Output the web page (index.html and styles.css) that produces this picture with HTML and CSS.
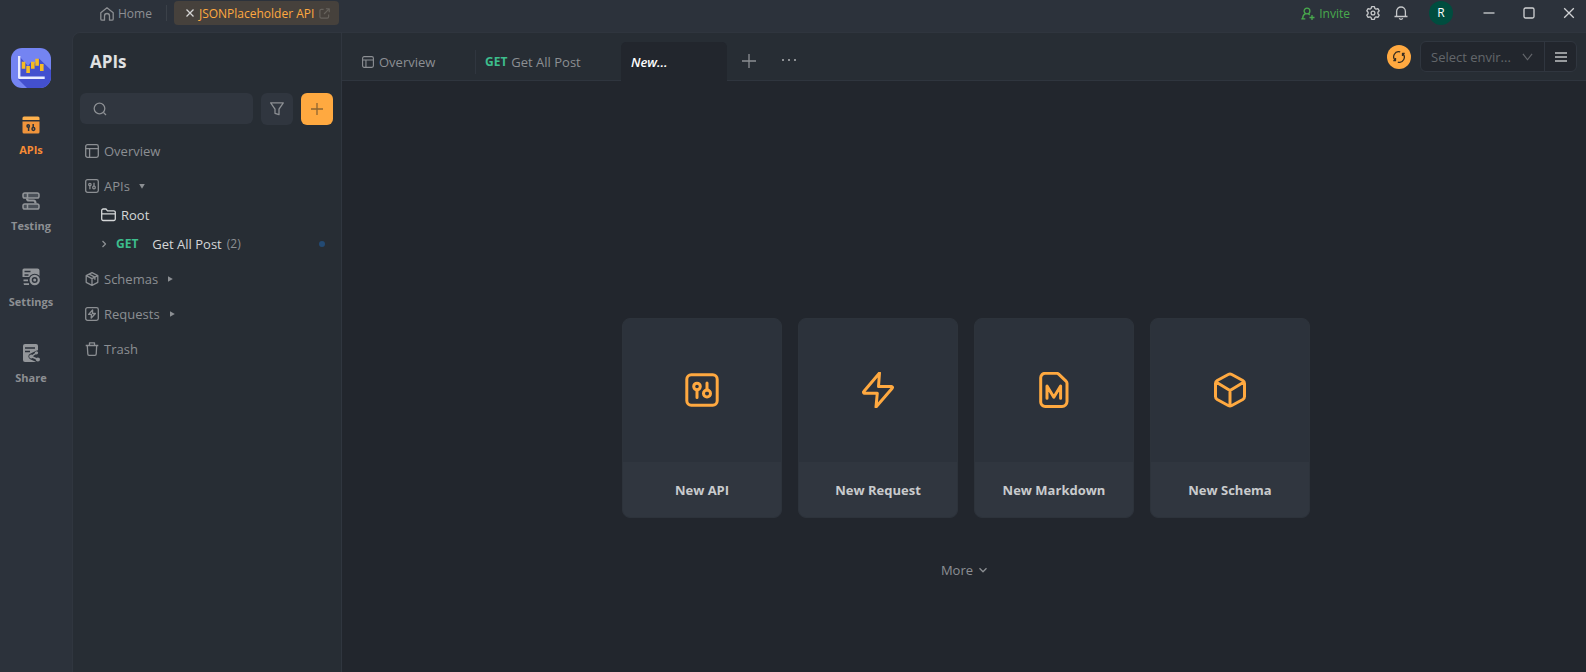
FILE: index.html
```html
<!DOCTYPE html>
<html lang="en">
<head>
<meta charset="utf-8">
<title>JSONPlaceholder API</title>
<link rel="stylesheet" href="styles.css">
</head>
<body>
<svg class="defs" aria-hidden="true">
  <symbol id="i-layout" viewBox="0 0 14 14"><rect x=".7" y=".7" width="12.6" height="12.6" rx="1.8"/><path d="M.7 4.6h12.6M4.6 4.6v8.7"/></symbol>
  <symbol id="i-api" viewBox="0 0 14 14"><rect x=".7" y=".7" width="12.6" height="12.6" rx="1.8"/><circle cx="4.9" cy="5.5" r="1.2"/><path d="M4.9 6.7v3.5M9 3.8v3.2"/><circle cx="9" cy="8.5" r="1.3"/></symbol>
  <symbol id="i-box" viewBox="0 0 14 14"><path d="M7 .7l5.800 3v6.600L7 13.300l-5.800-3V3.700zM1.200 3.700L7 6.700l5.800-3M7 6.700v6.600M4.100 2.200l5.800 3v2.600"/></symbol>
  <symbol id="i-request" viewBox="0 0 14 14"><rect x=".7" y=".7" width="12.600" height="12.600" rx="1.800"/><path d="M7.600 3L3.600 7.400h2.800L6.200 11l4.200-4.500H7.500z"/></symbol>
</svg>
<header class="titlebar">
  <nav class="crumbs">
    <a class="home" href="#">
      <svg class="ic14" viewBox="0 0 14 14"><path d="M.8 5.800L7 .8l6.200 5v6.100a1.300 1.300 0 0 1-1.300 1.300H9.500V9a2.500 2.500 0 0 0-5 0v4.200H2.100A1.300 1.300 0 0 1 .8 11.900z"/></svg>
      Home
    </a>
    <span class="crumb-line"></span>
    <div class="project">
      <button class="bare" aria-label="Close project"><svg class="ic8" viewBox="0 0 8 8"><path d="M.5.5l7 7M7.500.5l-7 7"/></svg></button>
      <a href="#">JSONPlaceholder API</a>
      <svg class="external" viewBox="0 0 12 12"><path d="M5 1.500H2.500a1.500 1.500 0 0 0-1.500 1.500v6.500A1.500 1.500 0 0 0 2.500 11H9a1.500 1.500 0 0 0 1.500-1.500V7M7.500.8h3.700v3.700M11 1L5.500 6.500"/></svg>
    </div>
  </nav>
  <div class="actions">
    <button class="invite">
      <svg class="ic14" viewBox="0 0 14 14"><circle cx="6" cy="4" r="2.900"/><path d="M4.600 6.600C2.500 7.500 1.700 9 1.700 11.500M.3 11.800h4M7.200 6.600l1.500 1.400M11 8v5M8.500 10.500h5"/></svg>
      Invite
    </button>
    <button class="bare gear" aria-label="Settings"><svg class="ic14" viewBox="0 0 14 14"><path d="M5.600.7h2.800l.5 1.800 1.100.6 1.900-.5 1.300 2.300L11.900 6.300v1.400l1.300 1.400-1.300 2.300-1.900-.5-1.100.6-.5 1.800H5.600l-.5-1.800-1.100-.6-1.900.5L.8 9.100l1.300-1.400V6.300L.8 4.900l1.300-2.300 1.900.5 1.100-.6z"/><circle cx="7" cy="7" r="1.900"/></svg></button>
    <button class="bare bell" aria-label="Notifications"><svg class="ic14" viewBox="0 0 14 14"><path d="M2.600 10.500V5.400a4.400 4.400 0 0 1 8.800 0v5.100M.5 10.500h13M5.300 12.300a1.800 1.500 0 0 0 3.400 0"/></svg></button>
    <button class="avatar" aria-label="Account">R</button>
    <div class="window-buttons">
      <button class="bare" aria-label="Minimize"><svg class="ic12" viewBox="0 0 12 12"><path d="M.5 6h11"/></svg></button>
      <button class="bare" aria-label="Maximize"><svg class="ic12" viewBox="0 0 12 12"><rect x="1" y="1" width="10" height="10" rx="1.500"/></svg></button>
      <button class="bare" aria-label="Close"><svg class="ic12" viewBox="0 0 12 12"><path d="M1.200 1.200l9.600 9.600M10.800 1.200l-9.600 9.600"/></svg></button>
    </div>
  </div>
</header>

<div class="body">
  <nav class="rail">
    <svg class="logo" viewBox="0 0 40 40">
      <rect width="40" height="40" rx="11" fill="#7484f2"/>
      <path d="M7 31l9 9h13a11 11 0 0 0 11-11v-7L28 10.500 23 16l-3-2-3 4L9 9z" fill="#4350cf"/>
      <path d="M8.200 8v21.700H33.700" fill="none" stroke="#e8ebff" stroke-width="2.400"/>
      <path d="M12.500 13.700v7M17.100 18v7M21.800 13.700v7M26.100 10.700v7M30.800 16v7" fill="none" stroke="#f5bb24" stroke-width="3.600"/>
    </svg>
    <a class="rail-item current" href="#">
      <svg class="ic18" viewBox="0 0 18 18"><path d="M.5 4V2A1.500 1.500 0 0 1 2 .5h14A1.500 1.500 0 0 1 17.500 2v2z" fill="#ffb14d"/><path d="M.5 5.500h17V16a1.500 1.500 0 0 1-1.500 1.500H2A1.500 1.500 0 0 1 .5 16z" fill="#f0943c"/><g fill="none" stroke="#2c323b" stroke-width="1.500"><circle cx="6.200" cy="10" r="1.200"/><path d="M6.600 11v4M11.200 8v3.500"/><circle cx="11.400" cy="13" r="1.400"/></g></svg>
      APIs
    </a>
    <a class="rail-item" href="#">
      <svg class="ic18" viewBox="0 0 18 18"><g fill="#4a5058" stroke="#93969a" stroke-width="1.500"><rect x="1" y="1" width="16" height="5" rx="1.800"/><rect x="1" y="12" width="16" height="5" rx="1.800"/><path d="M5 6.500c0 1.500.5 2 2 2h4.500c1.500 0 2 1 2 3" fill="none" stroke-width="2.200"/><path d="M5.500 1v5M5.500 12v5" /></g></svg>
      Testing
    </a>
    <a class="rail-item" href="#">
      <svg class="ic18" viewBox="0 0 18 18"><path d="M2 .5h13.500A2 2 0 0 1 17.500 2.500V9H.5V2A1.500 1.500 0 0 1 2 .5zM1.500 11.500H6v1.800H1.500zM1.500 15.200H7V17H2z" fill="#93969a"/><path d="M2.500 3.500h6M2.500 7h4" stroke="#2c323b" stroke-width="1.300"/><circle cx="12.700" cy="12" r="6.300" fill="#2c323b"/><circle cx="12.700" cy="12" r="4.100" fill="none" stroke="#93969a" stroke-width="2.200"/><circle cx="12.700" cy="12" r="1.500" fill="#93969a"/></svg>
      Settings
    </a>
    <a class="rail-item" href="#">
      <svg class="ic18" viewBox="0 0 18 18"><rect x="1" width="15" height="18" rx="2" fill="#93969a"/><path d="M3 4h10M3 7.500h5" stroke="#2c323b" stroke-width="1.300"/><path d="M15.500 9.500L9.500 12.500l6.500 3" fill="none" stroke="#2c323b" stroke-width="6" stroke-linecap="round"/><path d="M14.500 8.800L9.200 12.500l6.800 3" fill="none" stroke="#93969a" stroke-width="1.500"/><circle cx="14.500" cy="8.800" r="1.600" fill="#93969a"/><circle cx="9.200" cy="12.500" r="2" fill="#93969a"/><circle cx="15.900" cy="15.500" r="2.100" fill="#93969a"/></svg>
      Share
    </a>
  </nav>

  <aside class="panel">
    <h1>APIs</h1>
    <div class="tools">
      <label class="search">
        <svg class="ic14" viewBox="0 0 14 14"><circle cx="6.500" cy="6.500" r="5.300"/><path d="M10.500 10.500l2.500 2.500"/></svg>
        <input type="search" aria-label="Search APIs">
      </label>
      <button class="tool" aria-label="Filter"><svg class="ic14" viewBox="0 0 14 14"><path d="M.7.800h12.600L9 7.200v5.500l-4-1.400V7.200z"/></svg></button>
      <button class="tool add" aria-label="Add"><svg class="ic12" viewBox="0 0 12 12"><path d="M6 0v12M0 6h12"/></svg></button>
    </div>
    <nav class="tree">
      <a class="node" href="#"><svg class="ic14"><use href="#i-layout"/></svg>Overview</a>
      <a class="node" href="#"><svg class="ic14"><use href="#i-api"/></svg>APIs<svg class="caret" viewBox="0 0 6 6"><path d="M.2 1h5.600L3 5.800z"/></svg></a>
      <a class="leaf" href="#"><svg class="folder" viewBox="0 0 15 14"><path d="M.7 11V2.500A1.500 1.500 0 0 1 2.200 1H5l1.500 1.800h6.300a1.500 1.500 0 0 1 1.500 1.500V11a1.500 1.500 0 0 1-1.500 1.500H2.200A1.500 1.500 0 0 1 .7 11zM.7 5.800h13.600"/></svg>Root</a>
      <a class="leaf" href="#"><svg class="chevron" viewBox="0 0 6 8"><path d="M1.500 1l3 3-3 3"/></svg><b class="method">GET</b>Get All Post<small>(2)</small><i class="dot"></i></a>
      <a class="node" href="#"><svg class="ic14"><use href="#i-box"/></svg>Schemas<svg class="caret" viewBox="0 0 6 6"><path d="M1 .2v5.600L5.800 3z"/></svg></a>
      <a class="node" href="#"><svg class="ic14"><use href="#i-request"/></svg>Requests<svg class="caret" viewBox="0 0 6 6"><path d="M1 .2v5.600L5.800 3z"/></svg></a>
      <a class="node" href="#"><svg class="ic14" viewBox="0 0 14 14"><path d="M.7 3.500h12.600M4.500 3.500V.8h5v2.700M2.300 3.500l.5 8.500a1.300 1.300 0 0 0 1.300 1.300h5.800a1.300 1.300 0 0 0 1.300-1.300l.5-8.500"/></svg>Trash</a>
    </nav>
  </aside>

  <main class="main">
    <div class="tabbar">
      <div class="tabs" role="tablist">
        <button class="tab overview" role="tab"><svg class="ic12"><use href="#i-layout"/></svg>Overview</button>
        <button class="tab request" role="tab"><b>GET</b>Get All Post</button>
        <button class="tab active" role="tab" aria-selected="true">New...</button>
        <button class="bare new-tab" aria-label="New tab"><svg class="ic14" viewBox="0 0 14 14"><path d="M7 0v14M0 7h14"/></svg></button>
        <button class="bare more-tabs" aria-label="More tabs"><svg class="ic14" viewBox="0 0 14 14"><path d="M0 6h2M6 6h2M12 6h2"/></svg></button>
      </div>
      <div class="env">
        <button class="sync" aria-label="Sync"><svg class="ic12" viewBox="0 0 12 12"><path d="M7.200.9A5.100 5.100 0 0 0 2.300 9.500M2.500 7v2.700H.3M4.800 11.100A5.100 5.100 0 0 0 9.700 2.500M9.500 5V2.300h2.200"/></svg></button>
        <div class="env-box">
          <div class="select-wrap">
            <select aria-label="Environment"><option>Select envir...</option></select>
            <svg class="select-arrow" viewBox="0 0 12 8"><path d="M1 .5l5 6.500 5-6.500"/></svg>
          </div>
          <button class="menu" aria-label="Manage environments"><svg class="ic12" viewBox="0 0 12 12"><path d="M0 2h12M0 6h12M0 10h12"/></svg></button>
        </div>
      </div>
    </div>
    <section class="start">
      <div class="cards">
        <button class="card"><span class="art"><svg class="ic36" viewBox="0 0 36 36"><rect x="2.800" y="2.800" width="30.400" height="30.400" rx="4.500"/><circle cx="13" cy="14.500" r="3.300"/><path d="M13 18v7.500M23 11v7"/><circle cx="23" cy="21.500" r="3.500"/></svg></span><span class="name">New API</span></button>
        <button class="card"><span class="art"><svg class="ic36" viewBox="0 0 36 36"><path d="M19.500 1L3.800 19.500a1 1 0 0 0 .7 1.700h12.800L16 35l16.200-18.800a1 1 0 0 0-.7-1.700H18.500z"/></svg></span><span class="name">New Request</span></button>
        <button class="card"><span class="art"><svg class="ic36" viewBox="0 0 36 36"><path d="M9.200 1.300h11.500a3 3 0 0 1 2 .8l7.300 7.100a3 3 0 0 1 1 2.100v18.200a5 5 0 0 1-5 5H9.200a4.500 4.500 0 0 1-4.500-4.500V5.800a4.500 4.500 0 0 1 4.500-4.500zM11 26.200V14l6.800 11.200L24.600 14v12.200"/></svg></span><span class="name">New Markdown</span></button>
        <button class="card"><span class="art"><svg class="ic36" viewBox="0 0 36 36"><path d="M16.200 2.500a4 4 0 0 1 3.600 0l11 6a3.500 3.500 0 0 1 1.700 3v13a3.500 3.500 0 0 1-1.700 3l-11 6a4 4 0 0 1-3.600 0l-11-6a3.500 3.500 0 0 1-1.700-3v-13a3.500 3.500 0 0 1 1.700-3zM4 10l14 8.500L32 10M18 18.500V34"/></svg></span><span class="name">New Schema</span></button>
      </div>
      <button class="more">More<svg class="ic8" viewBox="0 0 8 8"><path d="M.5 2.200L4 5.700l3.500-3.500"/></svg></button>
    </section>
  </main>
</div>
</body>
</html>
```
FILE: styles.css
```css
* { box-sizing: border-box; }
body {
  margin: 0;
  min-height: 100vh;
  display: flex;
  flex-direction: column;
  background: #2c323b;
  color: #8c8f93;
  font: 13px/20px "Open Sans", "Noto Sans", sans-serif;
}
a { color: inherit; text-decoration: none; }
button, input, select { font: inherit; color: inherit; background: none; border: 0; margin: 0; padding: 0; outline: 0; }
svg { flex: none; fill: none; stroke: currentColor; stroke-width: 1.3; stroke-linejoin: round; }
.defs { position: absolute; width: 0; height: 0; }
.ic8 { width: 8px; height: 8px; }
.ic12 { width: 12px; height: 12px; }
.ic14 { width: 14px; height: 14px; }
.ic18 { width: 18px; height: 18px; stroke: none; }
.ic36 { width: 36px; height: 36px; stroke-width: 3; stroke-linecap: round; }
.bare { display: flex; align-items: center; justify-content: center; }

.titlebar { display: flex; justify-content: space-between; height: 32px; padding: 1px 11px 0 100px; font-size: 12px; }
.crumbs, .actions { display: flex; align-items: center; height: 24px; }
.home { display: flex; align-items: center; gap: 4px; }
.crumb-line { width: 1px; height: 16px; margin: 0 7px 0 14px; background: #3b4149; }
.project { display: flex; align-items: center; gap: 5px; height: 24px; padding: 0 9px 0 12px; border-radius: 4px; background: #46413c; color: #ffa940; }
.project .bare { color: #d5d5d4; }
.home, .project a, .invite { padding-top: 2px; }
.external { width: 11px; height: 11px; color: #66625c; }
.invite { display: flex; align-items: center; gap: 4px; color: #49aa4d; }
.gear { margin-left: 16px; color: #c6c8ca; }
.bell { margin-left: 14px; color: #c6c8ca; }
.avatar { width: 24px; height: 24px; margin-left: 21px; border-radius: 50%; background: #004d3f; color: #fff; }
.window-buttons { display: flex; gap: 28px; margin-left: 30px; color: #d0d2d4; }

.body { flex: 1; display: flex; }
.rail { width: 62px; margin-right: 10px; padding-top: 16px; display: flex; flex-direction: column; align-items: center; font-size: 11px; line-height: 18px; font-weight: 700; }
.logo { width: 40px; height: 40px; margin-bottom: 28px; stroke: none; }
.rail-item { display: flex; flex-direction: column; align-items: center; gap: 7px; height: 76px; }
.rail-item.current { color: #f68b35; }

.panel { width: 270px; border: 1px solid #30363f; border-width: 1px 1px 0; border-top-left-radius: 8px; background: #272d34; padding: 16px 8px 0 7px; }
h1 { margin: 0 0 18px; padding-left: 10px; color: #e0e1e2; font-size: 17px; line-height: 26px; font-weight: 700; }
.tools { display: flex; gap: 8px; }
.search { flex: 1; min-width: 0; display: flex; align-items: center; gap: 8px; height: 31px; padding: 0 12px 0 13px; border-radius: 6px; background: #30363f; }
.search input { flex: 1; min-width: 0; }
.tool { width: 32px; height: 32px; display: flex; align-items: center; justify-content: center; border-radius: 6px; background: #30363f; }
.add { background: #ffa940; color: #8f6631; }
.tree { display: flex; flex-direction: column; padding: 6px 6px 0 5px; }
.node, .leaf { display: flex; align-items: center; gap: 5px; height: 29px; }
.node { margin-top: 6px; }
.tree > .node:first-child { margin-top: 5px; }
.leaf { padding-left: 16px; color: #d5d7d8; }
.folder { width: 15px; height: 14px; }
.chevron { width: 6px; height: 8px; color: #8c8f93; }
.method { margin: 0 9px 0 4px; color: #3dbd8d; font-size: 12px; }
.leaf small { color: #8c8f93; font-size: 12px; }
.dot { width: 6px; height: 6px; margin-left: auto; margin-right: 2px; border-radius: 50%; background: #234a73; }
.caret { width: 6px; height: 6px; margin-left: 4px; fill: currentColor; stroke: none; }

.main { flex: 1; min-width: 0; display: flex; flex-direction: column; background: #22262d; }
.tabbar { display: flex; justify-content: space-between; height: 49px; padding-right: 9px; border: 1px solid #2f353e; border-width: 1px 0; background: #272d34; }
.tabs { display: flex; align-items: flex-start; padding-top: 9px; }
.tab { display: flex; align-items: center; height: 39px; }
.overview { width: 134px; padding-left: 20px; gap: 5px; border-right: 1px solid #30363f; height: 24px; margin-top: 8px; }
.request { width: 145px; padding-left: 9px; gap: 4px; }
.request b { color: #3dbd8d; font-size: 12px; }
.active { width: 106px; padding-left: 10px; border-radius: 5px 5px 0 0; background: #22262d; color: #fff; font-weight: 600; font-style: italic; }
.new-tab { height: 38px; margin-left: 15px; }
.more-tabs { height: 38px; margin-left: 26px; }
.more-tabs svg { stroke-width: 1.8; }
.env { display: flex; align-items: center; gap: 9px; }
.sync { width: 24px; height: 24px; display: flex; align-items: center; justify-content: center; border-radius: 50%; background: #ffa940; color: #3a2e20; }
.env-box { display: flex; height: 31px; border: 1px solid #30363f; border-radius: 6px; background: #22262d; }
.select-wrap { display: grid; align-items: center; width: 124px; border-right: 1px solid #30363f; }
.select-wrap > * { grid-area: 1 / 1; }
select { appearance: none; width: 100%; height: 29px; padding: 0 30px 0 10px; color: #63666b; }
.select-arrow { width: 11px; height: 8px; justify-self: end; margin-right: 11px; color: #63666b; pointer-events: none; }
.menu { width: 31px; display: flex; align-items: center; justify-content: center; color: #c0c2c4; }

.start { flex: 1; display: flex; flex-direction: column; align-items: center; padding: 237px 0 32px 4px; }
.cards { display: flex; gap: 16px; }
.card { display: flex; flex-direction: column; width: 160px; height: 200px; border: 1px solid #2d333b; border-radius: 8px; overflow: hidden; background: #2c323b; }
.art { flex: 1; width: 100%; display: flex; align-items: center; justify-content: center; padding-bottom: 2px; color: #ffa940; }
.name { width: 100%; height: 55px; line-height: 56px; background: #30363f; color: #c9cbcd; font-weight: 700; text-align: center; }
.more { display: flex; align-items: center; gap: 6px; margin-top: 42px; padding-right: 4px; }
```
